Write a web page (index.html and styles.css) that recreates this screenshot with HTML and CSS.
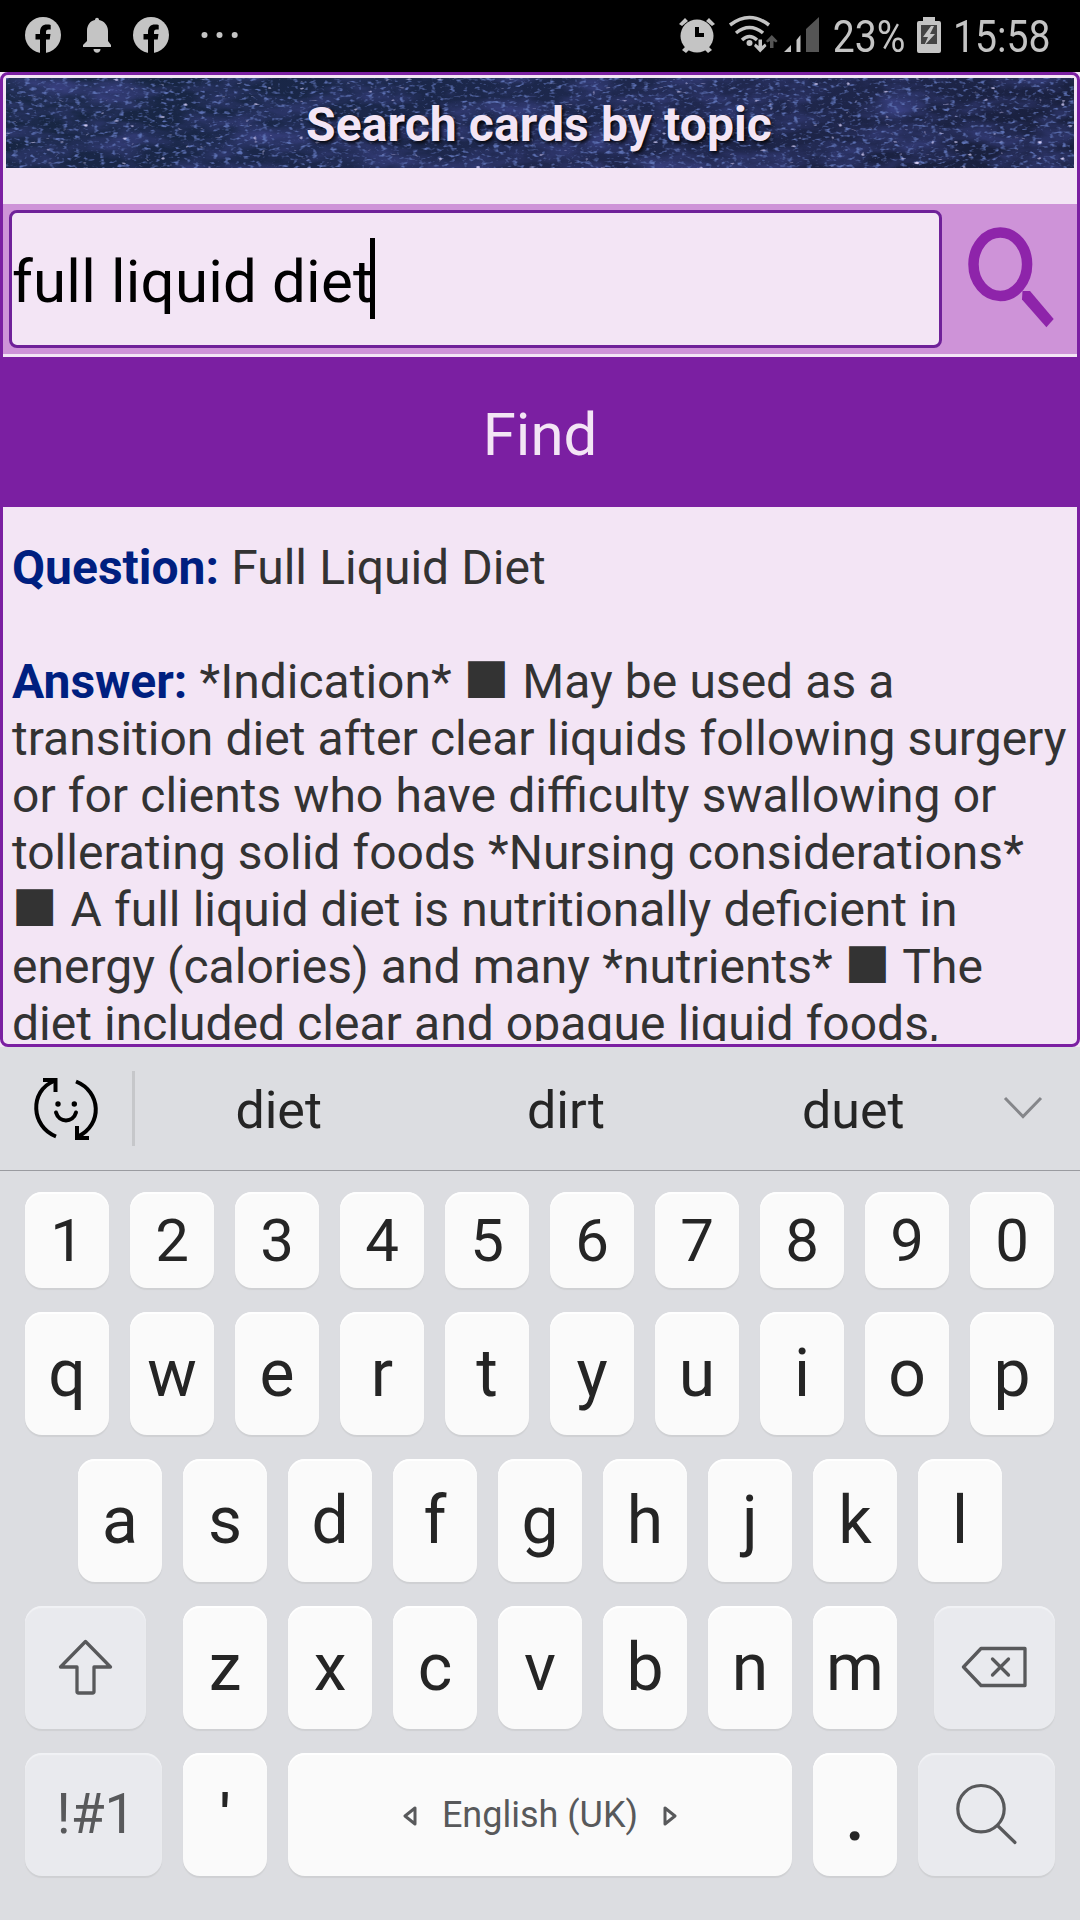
FILE: index.html
```
<!DOCTYPE html>
<html lang="en">
<head>
    <meta charset="UTF-8">
    <meta name="viewport" content="width=device-width, initial-scale=1.0">
    <title>Search cards</title>
    <link rel="stylesheet" href="styles.css">
</head>
<body>
    <div class="status">
        <div class="status-left">
            <svg width="250" height="72" viewBox="0 0 250 72">
                <g fill="#c4c4c4">
                    <circle cx="43" cy="35" r="18"/>
                    <path d="M83 47v-2l4-4V31c0-6 3-10 8-11 0-3 4-3 4 0 5 1 9 5 9 11v10l3 4v2z"/>
                    <path d="M93.500 49h7c0 5-7 5-7 0z"/>
                    <circle cx="151" cy="35" r="18"/>
                    <circle cx="204.500" cy="35" r="3"/>
                    <circle cx="219.500" cy="35" r="3"/>
                    <circle cx="234.700" cy="35" r="3"/>
                </g>
                <path id="fb" fill="#000" d="M40 54V39.500h-4.500V34H40v-1.500c0-5.500 2.500-8 7-8 1.500 0 2.700.1 3.700.4v4.700h-2.200c-2 0-2.500 1-2.500 3V34h4.500l-.8 5.500H46V54z"/>
                <use href="#fb" x="108"/>
            </svg>
        </div>
        <div class="status-right">
            <svg width="150" height="72" viewBox="675 0 150 72">
                <g fill="#c4c4c4">
                    <circle cx="697" cy="36" r="16.500"/>
                    <path d="M679 24l6-6 3 3-6 5zM715 24l-6-6-3 3 6 5zM682 50l4-4 4 3-4 4zM712 50l-4-4-4 3 4 4z"/>
                    <circle cx="749.500" cy="43" r="3"/>
                    <path d="M784 52l7-7v7zM796.500 52V40l4-5v17z"/>
                    <path d="M758.500 39.500h3.500V46l3-2.500 1.500 2.500-6.300 6.500L754 46l1.500-2.500 3 2.500z"/>
                </g>
                <path d="M697 27v8h7" fill="none" stroke="#000" stroke-width="4"/>
                <g fill="none" stroke="#c4c4c4" stroke-width="3.500">
                    <path d="M730 25q19.500-15 39 0"/>
                    <path d="M736 33q13.500-11 27 0"/>
                    <path d="M742 40q7.500-7 15 0"/>
                </g>
                <path fill="#555" d="M806 52V29l13-12v35zM770 48V41l-2.500 1.500L766 41l5.800-6 5.800 6-1.600 1.500L773.500 41v7z"/>
            </svg>
            <span class="percent">23%</span>
            <svg class="battery" width="24" height="36" viewBox="0 0 24 36">
                <path fill="#c4c4c4" d="M6 0h12v4h4q2 0 2 2v28q0 2-2 2H2q-2 0-2-2V6q0-2 2-2h4z"/>
                <path fill="#444" d="M4 8h16v19H4z"/>
                <path fill="#c4c4c4" d="M14 9L6 20h5L7 29l11-12h-5l4-8z"/>
            </svg>
            <span class="clock">15:58</span>
        </div>
    </div>

    <div class="app-wrap">
    <div class="app">
        <div class="banner">
            <svg class="stars" width="1068" height="90">
                <defs>
                    <linearGradient id="night" x1="0" x2="1" y1="0" y2=".2">
                        <stop offset="0" stop-color="#16253f"/>
                        <stop offset=".35" stop-color="#1a2749"/>
                        <stop offset=".7" stop-color="#20284f"/>
                        <stop offset="1" stop-color="#1a2140"/>
                    </linearGradient>
                    <filter id="dust" x="0" y="0" width="100%" height="100%" color-interpolation-filters="sRGB">
                        <feTurbulence type="fractalNoise" baseFrequency=".015 .04" numOctaves="5" seed="8"/>
                        <feColorMatrix values="0 0 0 0 .22  0 0 0 0 .25  0 0 0 0 .5  2.2 0 0 0 -.85"/>
                    </filter>
                    <filter id="grain" x="0" y="0" width="100%" height="100%" color-interpolation-filters="sRGB">
                        <feTurbulence type="fractalNoise" baseFrequency=".16 .3" numOctaves="2" seed="4"/>
                        <feColorMatrix values="0 0 0 0 .36  0 0 0 0 .44  0 0 0 0 .7  4 0 0 0 -2.200"/>
                    </filter>
                    <filter id="specks" x="0" y="0" width="100%" height="100%" color-interpolation-filters="sRGB">
                        <feTurbulence type="fractalNoise" baseFrequency=".13 .24" numOctaves="1" seed="21"/>
                        <feColorMatrix values="0 0 0 0 .82  0 0 0 0 .8  0 0 0 0 .96  0 9 0 0 -6.400"/>
                    </filter>
                </defs>
                <rect width="1068" height="90" fill="url(#night)"/>
                <rect width="1068" height="90" filter="url(#dust)"/>
                <rect width="1068" height="90" filter="url(#grain)"/>
                <rect width="1068" height="90" filter="url(#specks)"/>
            </svg>
            <h1>Search cards by topic</h1>
        </div>
        <div class="search">
            <div class="field">full liquid diet<span class="caret"></span></div>
            <svg width="135" height="150" viewBox="942 204 135 150">
                <ellipse cx="1000.300" cy="264.300" rx="26.800" ry="31.700" fill="none" stroke="#8e24aa" stroke-width="10.500"/>
                <path fill="#8e24aa" d="M1022.500 291h7.500l23.700 28-7.300 8.300L1022 299.500z"/>
            </svg>
        </div>
        <div class="find">Find</div>
        <div class="result">
            <p><b>Question:</b> Full Liquid Diet</p>
            <p><b>Answer:</b> *Indication* <i>■</i> May be used as a<br>transition diet after clear liquids following surgery<br>or for clients who have difficulty swallowing or<br>tollerating solid foods *Nursing considerations*<br><i>■</i> A full liquid diet is nutritionally deficient in<br>energy (calories) and many *nutrients* <i>■</i> The<br>diet included clear and opaque liquid foods,</p>
        </div>
    </div>
    </div>

    <div class="keyboard">
        <div class="suggest">
            <svg class="emoji" width="132" height="123" viewBox="0 1047 132 123">
                <g fill="none" stroke="#000" stroke-width="4">
                    <path d="M56 1136.500C31 1127 29 1091 54 1081"/>
                    <path d="M43 1080h12.500v12"/>
                    <path d="M76 1081.500c25 10 27 43 2 55"/>
                    <path d="M89 1138H77v-12"/>
                    <path d="M56 1112.500c3 10.500 17 10.500 20 0" stroke-linecap="round"/>
                </g>
                <circle cx="58" cy="1104" r="2.700"/>
                <circle cx="74.300" cy="1104" r="2.700"/>
            </svg>
            <div class="words">
                <span>diet</span>
                <span>dirt</span>
                <span>duet</span>
            </div>
            <svg width="83" height="123" viewBox="997 1047 83 123">
                <path d="M1005 1098l18 18.500 18-18.500" fill="none" stroke="#85868a" stroke-width="3"/>
            </svg>
        </div>
        <div class="keys">
            <div class="row numbers">
                <span class="key">1</span><span class="key">2</span><span class="key">3</span><span class="key">4</span><span class="key">5</span><span class="key">6</span><span class="key">7</span><span class="key">8</span><span class="key">9</span><span class="key">0</span>
            </div>
            <div class="row full">
                <span class="key">q</span><span class="key">w</span><span class="key">e</span><span class="key">r</span><span class="key">t</span><span class="key">y</span><span class="key">u</span><span class="key">i</span><span class="key">o</span><span class="key">p</span>
            </div>
            <div class="row">
                <span class="key">a</span><span class="key">s</span><span class="key">d</span><span class="key">f</span><span class="key">g</span><span class="key">h</span><span class="key">j</span><span class="key">k</span><span class="key">l</span>
            </div>
            <div class="row">
                <span class="key gray shift">
                    <svg width="121" height="123" viewBox="25 1606 121 123">
                        <path d="M85.500 1641.500L110.500 1667H94v24.500q0 1.500-1.500 1.500h-14q-1.500 0-1.500-1.500V1667H60.500z" fill="none" stroke="#58595b" stroke-width="3.300" stroke-linejoin="round"/>
                    </svg>
                </span>
                <span class="key">z</span><span class="key">x</span><span class="key">c</span><span class="key">v</span><span class="key">b</span><span class="key">n</span><span class="key">m</span>
                <span class="key gray back">
                    <svg width="121" height="123" viewBox="934 1606 121 123">
                        <g fill="none" stroke="#58595b" stroke-width="3.300" stroke-linecap="round" stroke-linejoin="round">
                            <path d="M981 1648.500h44v37h-44L963.500 1667z"/>
                            <path d="M992.500 1659l16 16M1008.500 1659l-16 16"/>
                        </g>
                    </svg>
                </span>
            </div>
            <div class="row">
                <span class="key gray sym">!#1</span>
                <span class="key quote">'</span>
                <span class="key space">
                    <svg width="14" height="20" viewBox="0 0 14 20"><path d="M12 2v16L2 10z" fill="none" stroke="#58595b" stroke-width="3" stroke-linejoin="round"/></svg>
                    <em>English (UK)</em>
                    <svg width="14" height="20" viewBox="0 0 14 20"><path d="M2 2v16l10-8z" fill="none" stroke="#58595b" stroke-width="3" stroke-linejoin="round"/></svg>
                </span>
                <span class="key dot">.</span>
                <span class="key gray go">
                    <svg width="137" height="123" viewBox="918 1753 137 123">
                        <g fill="none" stroke="#58595b" stroke-width="3.200" stroke-linecap="round">
                            <circle cx="981" cy="1808.700" r="23.200"/>
                            <path d="M997.500 1825.500l17.500 17"/>
                        </g>
                    </svg>
                </span>
            </div>
        </div>
    </div>
</body>
</html>
```
FILE: styles.css
```
*{
    margin: 0;
    padding: 0;
    box-sizing: border-box;
    font-family: Roboto,sans-serif;
}
body{
    width: 1080px;
    height: 1920px;
    overflow: hidden;
    background: #dcdde1;
}
svg{
    display: block;
    flex: none;
}
.status{
    height: 72px;
    background: #000;
    color: #c4c4c4;
    display: flex;
    justify-content: space-between;
    font-size: 45px;
    line-height: 72px;
}
.status-right{
    display: flex;
    width: 405px;
}
/* narrow system digits */
.percent,.clock{
    transform: scaleX(.87);
    transform-origin: 0 50%;
    white-space: nowrap;
    padding-top: 1px;
}
.percent{
    width: 92px;
    padding-left: 9px;
}
.battery{
    margin: 17px 12px 0 0;
}
.clock{
    width: 120px;
}
.app-wrap{
    background: #f3e5f5;
    height: 975px;
}
.app{
    height: 975px;
    border: 3px solid #7b1fa2;
    border-radius: 8px;
    background: #f3e5f5;
}
.banner{
    position: relative;
    height: 90px;
    margin: 3px 3px 36px;
}
.stars{
    position: absolute;
    left: 0;
    top: 0;
}
.banner h1{
    position: relative;
    text-align: center;
    font-size: 48px;
    line-height: 93px;
    letter-spacing: .1px;
    color: #f3e5f5;
    text-shadow: 2px 2px 4px #000;
    left: -1px;
}
.search{
    display: flex;
    height: 150px;
    background: #ce93d8;
    padding-left: 6px;
}
.field{
    width: 933px;
    height: 138px;
    margin-top: 6px;
    border: 3px solid #6f2199;
    border-radius: 8px;
    background: #f3e5f5;
    font-size: 60px;
    letter-spacing: .2px;
    padding-top: 4px;
    color: #000;
    display: flex;
    align-items: center;
    white-space: nowrap;
}
.caret{
    width: 5px;
    height: 81px;
    background: #000;
    margin: -5px 0 0 -3px;
}
.find{
    height: 150px;
    margin-top: 3px;
    background: #7b1fa2;
    color: #f3e5f5;
    font-size: 60px;
    line-height: 156px;
    text-align: center;
}
.result{
    height: 534px;
    padding: 32px 0 0 9px;
    overflow: hidden;
    font-size: 48px;
    line-height: 57px;
    word-spacing: .25px;
    color: #333;
    white-space: nowrap;
}
.result p{
    margin-bottom: 57px;
}
.result b{
    color: #001f80;
}
.result i{
    font-family: "DejaVu Sans",sans-serif;
    font-style: normal;
    line-height: 0;
    vertical-align: 6px;
    margin-right: 1px;
}
.suggest{
    height: 124px;
    border-bottom: 1px solid #9a9ba0;
    display: flex;
}
.words{
    width: 865px;
    display: flex;
    border-left: 3px solid #c6c7ca;
    height: 75px;
    margin-top: 24px;
}
.words span{
    flex: 1;
    text-align: center;
    font-size: 52px;
    line-height: 79px;
    color: #252525;
}
.keys{
    padding: 21px 25px 0;
    display: flex;
    flex-direction: column;
    gap: 24px;
}
.row{
    display: flex;
    justify-content: center;
    gap: 21px;
    height: 123px;
}
.numbers,.full{
    justify-content: flex-start;
}
.key{
    width: 84px;
    height: 123px;
    flex: none;
    border-radius: 17px;
    background: #fafafa;
    box-shadow: 0 2px 1px #cfd0d3, inset 0 2px 1px #fff;
    color: #252525;
    font-size: 66px;
    line-height: 123px;
    text-align: center;
}
.numbers,.numbers .key{
    height: 96px;
    line-height: 97px;
    font-size: 60px;
}
.gray{
    background: #e9eaee;
    color: #58595b;
    box-shadow: 0 2px 1px #cfd0d3, inset 0 2px 1px #f1f2f5;
}
.shift{
    width: 121px;
    margin-right: 16px;
}
.back{
    width: 121px;
    margin-left: 16px;
}
.sym,.go{
    width: 137px;
}
.sym{
    font-size: 55px;
    padding-left: 5px;
}
.quote{
    font-size: 60px;
    font-weight: 500;
    line-height: 127px;
}
.space{
    width: 504px;
    display: flex;
    align-items: center;
    justify-content: center;
    gap: 25px;
    font-size: 36px;
    color: #58595b;
}
.space svg{
    margin-top: 3px;
}
.space em{
    font-style: normal;
    padding-top: 2px;
}
.dot{
    font-size: 72px;
    font-weight: 500;
    padding-top: 1px;
}
```
